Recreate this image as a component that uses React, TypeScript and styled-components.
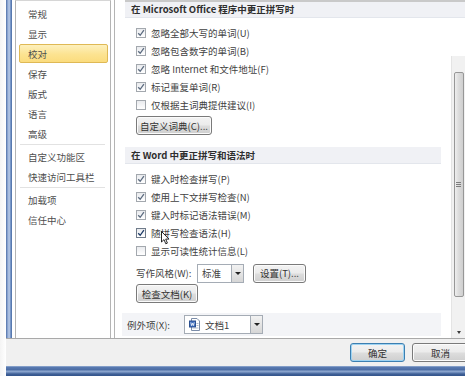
import React from 'react';
import styled, { createGlobalStyle } from 'styled-components';

const GlobalStyle = createGlobalStyle`
  html, body {
    margin: 0;
    padding: 0;
    background: #ffffff;
  }
  body {
    font-family: "Noto Sans CJK SC", "Noto Sans", "Liberation Sans", sans-serif;
    font-size: 9.5px;
    color: #3c3c3c;
  }
`;

const Screen = styled.div`
  width: 465px;
  height: 376px;
  display: flex;
  overflow: hidden;
  background: #ffffff;
  position: relative;
`;

const Edge = styled.div`
  width: 6px;
  flex: none;
  background: linear-gradient(90deg, #f4f4f4, #ffffff);
`;

const Window = styled.div`
  flex: 1;
  display: flex;
  flex-direction: column;
  min-width: 0;
`;

const Main = styled.div`
  height: 339px;
  flex: none;
  display: flex;
  border-bottom: 1px solid #a9a9a9;
  box-sizing: border-box;
  background: #ffffff;
`;

const Stripe = styled.div`
  width: 6px;
  flex: none;
  background: linear-gradient(90deg, #4f70a8 0%, #9fb6dc 35%, #b7c9e6 55%, #6a8bc0 80%, #4b6ca2 100%);
  margin-right: 3px;
`;

const Nav = styled.ul`
  width: 96px;
  flex: none;
  box-sizing: border-box;
  margin: 0;
  padding: 3px 0 0;
  list-style: none;
  border-left: 1px solid #b4b4b4;
  border-right: 1px solid #b4b4b4;
  border-top: 1px solid #d6d6d6;
`;

const NavItem = styled.li<{ $active?: boolean }>`
  height: 19px;
  line-height: 19px;
  margin: 0 2px 0 3px;
  padding-left: 8px;
  box-sizing: border-box;
  color: #4d4d4d;
  white-space: nowrap;
  border-radius: 2px;
  border: 1px solid ${p => (p.$active ? '#dfb955' : 'transparent')};
  background: ${p => (p.$active ? 'linear-gradient(180deg, #fdf0bd 0%, #fce391 55%, #fbdc7e 100%)' : 'transparent')};
  & + & {
    margin-top: 1px;
  }
`;

const NavSep = styled.li`
  height: 1px;
  margin: 1px 5px 2px 4px;
  background: #e2e2e2;
`;

const RightPane = styled.div`
  flex: 1;
  margin-left: 3px;
  border-left: 1px solid #b4b4b4;
  display: flex;
  flex-direction: column;
  min-width: 0;
`;

const TopHeader = styled.div`
  height: 18px;
  flex: none;
  margin-left: 10px;
  padding-left: 6px;
  box-sizing: border-box;
  border-top: 2px solid #c9c9c9;
  border-bottom: 1px solid #e3e6ec;
  background: #f0f1f5;
  font-weight: bold;
  line-height: 15px;
  color: #2e2e2e;
  white-space: nowrap;
`;

const ScrollRow = styled.div`
  flex: 1;
  display: flex;
  min-height: 0;
`;

const Body = styled.div`
  flex: 1;
  padding: 0 10px 0 10px;
  display: flex;
  flex-direction: column;
  align-items: flex-start;
  min-width: 0;
`;

const Header = styled.div`
  align-self: stretch;
  height: 17px;
  margin-top: 12px;
  padding-left: 6px;
  box-sizing: border-box;
  background: #f0f1f5;
  border-bottom: 1px solid #e3e6ec;
  font-weight: bold;
  line-height: 16px;
  color: #2e2e2e;
  white-space: nowrap;
`;

const CheckList = styled.div`
  margin-top: 6px;
  padding-left: 11px;
  display: flex;
  flex-direction: column;
`;

const CheckRow = styled.label`
  height: 18px;
  display: flex;
  align-items: center;
  gap: 5px;
  white-space: nowrap;
  position: relative;
  color: #3f3f3f;
`;

const Box = styled.span<{ $dark?: boolean }>`
  width: 10px;
  height: 10px;
  box-sizing: border-box;
  border: 1px solid ${p => (p.$dark ? '#6f7b8a' : '#a3a8ae')};
  background: linear-gradient(180deg, #e9ebee 0%, #ffffff 100%);
  display: flex;
  align-items: center;
  justify-content: center;
  flex: none;
`;

const Button = styled.button<{ $w: number; $default?: boolean }>`
  width: ${p => p.$w}px;
  height: 19px;
  padding: 0;
  font: inherit;
  font-size: 9.5px;
  color: #333333;
  border-radius: 3px;
  border: 1px solid ${p => (p.$default ? '#3c7fb1' : '#7a7a7a')};
  box-shadow: inset 0 0 0 1px ${p => (p.$default ? '#9ed3f2' : '#fbfbfb')};
  background: linear-gradient(180deg, #f3f3f3 0%, #ebebeb 48%, #dddddd 52%, #cfcfcf 100%);
  white-space: nowrap;
  flex: none;
`;

const IndentButton = styled(Button)<{ $top: number }>`
  margin-left: 11px;
  margin-top: ${p => p.$top}px;
`;

const StyleRow = styled.div`
  margin-top: 3px;
  padding-left: 11px;
  height: 20px;
  display: flex;
  align-items: center;
  white-space: nowrap;
`;

const FieldLabel = styled.span<{ $w: number }>`
  width: ${p => p.$w}px;
  flex: none;
  color: #3f3f3f;
`;

const Select = styled.div<{ $w: number }>`
  width: ${p => p.$w}px;
  height: 19px;
  box-sizing: border-box;
  border: 1px solid #a5acb5;
  background: #ffffff;
  display: flex;
  align-items: center;
  flex: none;
  margin-right: 9px;
`;

const SelectText = styled.span`
  flex: 1;
  padding-left: 4px;
  display: flex;
  align-items: center;
  gap: 5px;
  color: #3f3f3f;
`;

const Arrow = styled.span`
  width: 12px;
  align-self: stretch;
  box-sizing: border-box;
  border-left: 1px solid #a5acb5;
  background: linear-gradient(180deg, #f2f2f2, #d6d6d6);
  display: flex;
  align-items: center;
  justify-content: center;
  &::after {
    content: '';
    border-left: 3px solid transparent;
    border-right: 3px solid transparent;
    border-top: 3px solid #222;
  }
`;

const ExceptBand = styled.div`
  align-self: stretch;
  margin-top: 10px;
  margin-left: -3px;
  height: 23px;
  padding-left: 5px;
  background: #f3f4f7;
  display: flex;
  align-items: center;
  white-space: nowrap;
`;

const Scrollbar = styled.div`
  width: 13px;
  flex: none;
  margin-top: 38px;
  background: #f1f1f1;
  border-left: 1px solid #e4e4e4;
  display: flex;
  flex-direction: column;
  align-items: center;
`;

const Thumb = styled.div`
  margin-top: 16px;
  width: 10px;
  height: 225px;
  box-sizing: border-box;
  border: 1px solid #979797;
  border-radius: 2px;
  background: linear-gradient(90deg, #eeeeee 0%, #dcdcdc 45%, #cfcfcf 100%);
  display: flex;
  align-items: center;
  justify-content: center;
  &::after {
    content: '';
    width: 5px;
    height: 5px;
    background: repeating-linear-gradient(180deg, #7d7d7d 0 1px, transparent 1px 2px);
  }
`;

const DownArrow = styled.span`
  margin-top: 34px;
  border-left: 2.5px solid transparent;
  border-right: 2.5px solid transparent;
  border-top: 3px solid #3c3c3c;
`;

const Footer = styled.div`
  height: 27px;
  flex: none;
  background: #f0f0f0;
  display: flex;
  justify-content: flex-end;
  align-items: flex-start;
  padding-top: 4px;
  box-sizing: border-box;
  gap: 7px;
  margin-right: -4px;
`;

const Taskbar = styled.div`
  flex: 1;
  background: linear-gradient(180deg, #a9bedd 0px, #5a7bb2 1px, #4a6ba3 4px, #93acd2 5px, #7d99c6 6px, #3e5f96 8px, #34558b 10px);
`;

const Cursor = styled.svg`
  position: absolute;
  left: 25px;
  top: 7px;
`;

const Check = ({ dark }: { dark?: boolean }) => (
  <svg width="8" height="8" viewBox="0 0 8 8">
    <path d="M1.2 4.2 L3.2 6.3 L6.9 1.2" fill="none" stroke={dark ? '#1d3b66' : '#5d6c80'} strokeWidth="1.3" />
  </svg>
);

const DocIcon = () => (
  <svg width="11" height="13" viewBox="0 0 11 13">
    <path d="M2.5 0.5 H8 L10.5 3 V12.5 H2.5 Z" fill="#ffffff" stroke="#7b8ca8" />
    <rect x="0.5" y="3" width="6" height="6" fill="#3f6fbf" stroke="#2a4f8f" />
    <path d="M1.8 4.4 L2.6 7.6 L3.5 5.2 L4.4 7.6 L5.2 4.4" fill="none" stroke="#ffffff" strokeWidth="0.8" />
    <path d="M7.5 5.5 H9.5 M7.5 7.5 H9.5 M3.5 10 H9.5" stroke="#9aa7bd" strokeWidth="0.8" />
  </svg>
);

type Item = { label: string; checked: boolean; dark?: boolean; cursor?: boolean };

const officeItems: Item[] = [
  { label: '忽略全部大写的单词(U)', checked: true },
  { label: '忽略包含数字的单词(B)', checked: true },
  { label: '忽略 Internet 和文件地址(F)', checked: true },
  { label: '标记重复单词(R)', checked: true },
  { label: '仅根据主词典提供建议(I)', checked: false },
];

const wordItems: Item[] = [
  { label: '键入时检查拼写(P)', checked: true },
  { label: '使用上下文拼写检查(N)', checked: true },
  { label: '键入时标记语法错误(M)', checked: true },
  { label: '随拼写检查语法(H)', checked: true, dark: true, cursor: true },
  { label: '显示可读性统计信息(L)', checked: false },
];

const navTop = ['常规', '显示', '校对', '保存', '版式', '语言', '高级'];

const CheckGroup = ({ items }: { items: Item[] }) => (
  <CheckList>
    {items.map(it => (
      <CheckRow key={it.label}>
        <Box $dark={it.dark}>{it.checked && <Check dark={it.dark} />}</Box>
        <span>{it.label}</span>
        {it.cursor && (
          <Cursor width="9" height="14" viewBox="0 0 9 14">
            <path d="M0.5 0.5 V11 L3 8.6 L4.8 12.8 L6.4 12.1 L4.7 8.1 H8 Z" fill="#ffffff" stroke="#111111" strokeWidth="0.9" />
          </Cursor>
        )}
      </CheckRow>
    ))}
  </CheckList>
);

export default function App() {
  return (
    <Screen>
      <GlobalStyle />
      <Edge />
      <Window>
        <Main>
          <Stripe />
          <Nav>
            {navTop.map(n => (
              <NavItem key={n} $active={n === '校对'}>{n}</NavItem>
            ))}
            <NavSep />
            <NavItem>自定义功能区</NavItem>
            <NavItem>快速访问工具栏</NavItem>
            <NavSep />
            <NavItem>加载项</NavItem>
            <NavItem>信任中心</NavItem>
          </Nav>
          <RightPane>
            <TopHeader>在 Microsoft Office 程序中更正拼写时</TopHeader>
            <ScrollRow>
              <Body>
                <CheckGroup items={officeItems} />
                <IndentButton $w={76} $top={2}>自定义词典(C)...</IndentButton>
                <Header>在 Word 中更正拼写和语法时</Header>
                <CheckGroup items={wordItems} />
                <StyleRow>
                  <FieldLabel $w={61}>写作风格(W):</FieldLabel>
                  <Select $w={47}>
                    <SelectText>标准</SelectText>
                    <Arrow />
                  </Select>
                  <Button $w={53}>设置(T)...</Button>
                </StyleRow>
                <IndentButton $w={62} $top={1}>检查文档(K)</IndentButton>
                <ExceptBand>
                  <FieldLabel $w={57}>例外项(X):</FieldLabel>
                  <Select $w={79}>
                    <SelectText>
                      <DocIcon />
                      文档1
                    </SelectText>
                    <Arrow />
                  </Select>
                </ExceptBand>
              </Body>
              <Scrollbar>
                <Thumb />
                <DownArrow />
              </Scrollbar>
            </ScrollRow>
          </RightPane>
        </Main>
        <Footer>
          <Button $w={55} $default>确定</Button>
          <Button $w={57}>取消</Button>
        </Footer>
        <Taskbar />
      </Window>
    </Screen>
  );
}
